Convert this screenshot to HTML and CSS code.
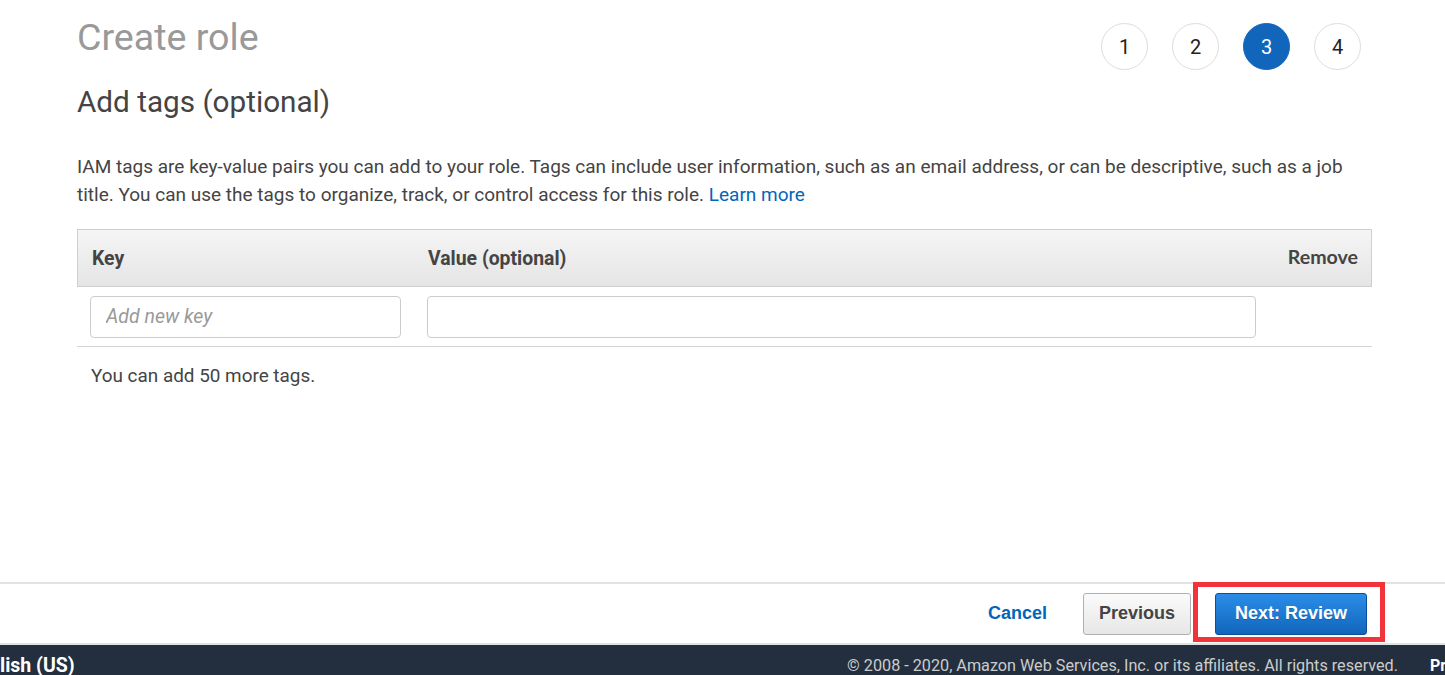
FILE: index.html
```html
<!DOCTYPE html>
<html>
<head>
<meta charset="utf-8">
<link rel="stylesheet" href="styles.css">
</head>
<body>
<div class="page">
  <main class="content">
    <div class="top">
      <h1 class="title">Create role</h1>
      <ol class="steps">
        <li class="step">1</li>
        <li class="step">2</li>
        <li class="step active">3</li>
        <li class="step">4</li>
      </ol>
    </div>
    <h2 class="subtitle">Add tags (optional)</h2>
    <p class="desc">IAM tags are key-value pairs you can add to your role. Tags can include user information, such as an email address, or can be descriptive, such as a job title. You can use the tags to organize, track, or control access for this role. <a class="link" href="#">Learn more</a></p>
    <div class="table">
      <div class="thead">
        <div class="th th-key">Key</div>
        <div class="th th-value">Value (optional)</div>
        <div class="th th-remove">Remove</div>
      </div>
      <div class="trow">
        <div class="cell cell-key"><input class="input" type="text" placeholder="Add new key"></div>
        <div class="cell cell-value"><input class="input" type="text"></div>
        <div class="cell cell-remove"></div>
      </div>
    </div>
    <p class="note">You can add 50 more tags.</p>
  </main>
  <div class="actions">
    <a class="btn-link" href="#">Cancel</a>
    <button class="btn btn-secondary">Previous</button>
    <div class="highlight"><button class="btn btn-primary">Next: Review</button></div>
  </div>
  <footer class="footer">
    <span class="lang">lish (US)</span>
    <span class="copy">© 2008 - 2020, Amazon Web Services, Inc. or its affiliates. All rights reserved.</span>
    <span class="privacy">Pr</span>
  </footer>
</div>
</body>
</html>
```
FILE: styles.css
```css
* { box-sizing: border-box; }
html, body { margin: 0; padding: 0; }
body {
  font-family: Roboto, "Liberation Sans", Arial, sans-serif;
  color: #444;
  background: #fff;
  width: 1445px;
  height: 675px;
  overflow: hidden;
}
.page {
  display: flex;
  flex-direction: column;
  height: 685px;
}
.content {
  flex: 1;
  padding-left: 77px;
  width: 1372px;
}
.top {
  display: flex;
  justify-content: space-between;
  align-items: flex-start;
}
.title {
  margin: 14px 0 0;
  font-size: 37.6px;
  font-weight: 400;
  color: #999;
  line-height: 46px;
}
.steps {
  list-style: none;
  display: flex;
  gap: 24px;
  margin: 23px 11px 0 0;
  padding: 0;
}
.step {
  width: 47px;
  height: 47px;
  border: 1px solid #ddd;
  border-radius: 50%;
  display: flex;
  align-items: center;
  justify-content: center;
  font-size: 20px;
  color: #222;
}
.step.active {
  background: #1166bb;
  border-color: #1166bb;
  color: #fff;
}
.subtitle {
  margin: 14px 0 0;
  font-size: 29.7px;
  font-weight: 400;
  color: #444;
  line-height: 36px;
}
.desc {
  margin: 33px 0 0;
  width: 1295px;
  font-size: 19px;
  line-height: 28px;
  color: #444;
}
.link {
  color: #0066bb;
  text-decoration: none;
}
.table {
  margin-top: 20px;
  width: 1295px;
}
.thead {
  display: flex;
  align-items: center;
  height: 58px;
  background: linear-gradient(#f5f5f5, #e5e5e5);
  border: 1px solid #cfcfcf;
  font-weight: 700;
  font-size: 19.4px;
  color: #444;
}
.th-key { width: 350px; padding-left: 14px; }
.th-value { flex: 1; }
.th-remove {
  padding-right: 13px;
  padding-bottom: 3px;
  font-family: Lato, "Liberation Sans", sans-serif;
  font-weight: 700;
  font-size: 19.6px;
}
.trow {
  display: flex;
  align-items: center;
  height: 60px;
  border-bottom: 1px solid #d5d5d5;
}
.cell-key { width: 350px; padding-left: 13px; }
.cell-key .input { width: 311px; }
.cell-value { width: 829px; }
.cell-value .input { width: 829px; }
.input {
  height: 42px;
  border: 1px solid #ccc;
  border-radius: 4px;
  font-family: Roboto, sans-serif;
  font-size: 19.5px;
  padding: 0 15px;
  color: #444;
  background: #fff;
  outline: none;
}
.input::placeholder {
  color: #999;
  font-style: italic;
}
.note {
  margin: 16px 0 0 14px;
  font-size: 18.9px;
  line-height: 26px;
  color: #444;
}
.actions {
  flex-shrink: 0;
  display: flex;
  align-items: center;
  justify-content: flex-end;
  height: 63px;
  border-top: 2px solid #e2e2e2;
  border-bottom: 2px solid #e2e2e2;
  padding-right: 78px;
  font-family: "Liberation Sans", Arial, sans-serif;
}
.btn-link {
  color: #0066bb;
  font-weight: 700;
  font-size: 18px;
  text-decoration: none;
  margin-right: 36px;
}
.btn {
  font-family: "Liberation Sans", Arial, sans-serif;
  font-weight: 700;
  font-size: 18px;
  height: 42px;
  border-radius: 3px;
  padding: 0;
}
.btn-secondary {
  background: linear-gradient(#fbfbfb, #e7e7e7);
  border: 1px solid #b0b0b0;
  color: #444;
  width: 108px;
}
.highlight {
  position: relative;
  margin-left: 24px;
  display: flex;
}
.highlight::before {
  content: "";
  position: absolute;
  top: -11px;
  bottom: -7px;
  left: -22px;
  right: -18px;
  border: 5px solid #f2333a;
  pointer-events: none;
}
.btn-primary {
  background: linear-gradient(#2b8de8, #1166bb);
  border: 1px solid #0a4f9a;
  color: #fff;
  width: 152px;
  text-shadow: 0 1px 0 rgba(0,0,0,0.2);
}
.footer {
  flex-shrink: 0;
  height: 40px;
  background: #232f3e;
  display: flex;
  align-items: center;
  font-size: 16.2px;
  color: #ccc;
}
.lang {
  color: #fff;
  font-weight: 700;
  font-size: 19.5px;
  margin-left: 0;
}
.copy {
  margin-left: auto;
  margin-right: 32px;
  color: #ccc;
}
.privacy {
  color: #fff;
  font-weight: 700;
  font-size: 16px;
  width: 15px;
  overflow: hidden;
  white-space: nowrap;
}
```
